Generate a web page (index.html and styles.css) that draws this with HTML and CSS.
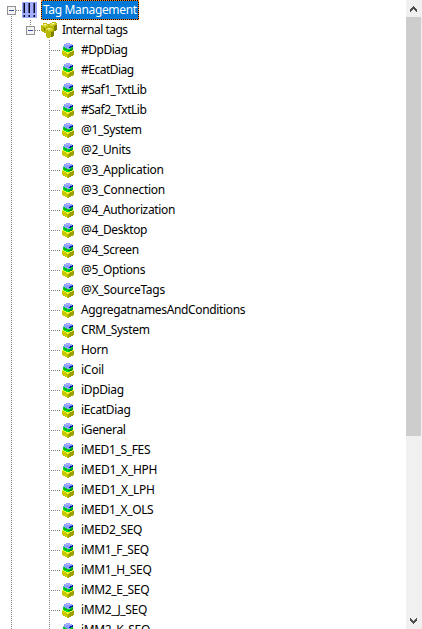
FILE: index.html
```html
<!DOCTYPE html>
<html lang="en">
<head>
<meta charset="utf-8">
<title>Tag Management</title>
<link rel="stylesheet" href="styles.css">
</head>
<body>
<svg class="defs" width="0" height="0">
  <symbol id="cube" viewBox="0 0 12 16">
    <path fill="#c8c800" d="M0 8h6v8H5v-1H3v-1H1v-1H0z"/>
    <path fill="#a0a000" d="M6 8h6v5h-1v1H9v1H7v1H6z"/>
    <path fill="#f4f430" d="M0 8h12v1h-2v1H8v1H7v1H5v-1H4v-1H2V9H0z"/>
    <path fill="#00dc20" d="M1 5h10v3h-1v1H8v1H4V9H2V8H1z"/>
    <path fill="#008c28" d="M6 9V8h2V7h2V6h1v2h-1v1zM2 6h1v1h2v1H3V7H2z"/>
    <path fill="#8c9cff" d="M1 4h1V2h2V1h4v1h2v2h1v1H9v1H8v1H5V6H3V5H1z"/>
    <path fill="#a8b4ff" d="M3 2h2V1h2v1h2v1H3z"/>
    <path fill="#0010b8" d="M7 5h1V4h2V3h1v2H9v1H7z"/>
  </symbol>
  <symbol id="group" viewBox="0 0 17 16">
    <path fill="#b8b800" d="M0 3h2V1h4v1h3V1h2V0h4v1h1v7h-1v1h-2v5h-1v1H9v1H6v-1H5v-4H3v-1H1V9H0z"/>
    <path fill="#d8d840" d="M1 3h1V2h4v1h1v1H5v1H3V4H1zM9 2h1V1h5v1h-1v1h-2v1H9zM5 7h1V6h5v1h1v1h-2v1H7V8H5z"/>
    <path fill="#f8f8a0" d="M3 2h2v1H3zM11 1h2v1h-2zM7 6h2v1H7z"/>
    <path fill="#808000" d="M13 4h1V3h2v5h-1v1h-2zM10 10h2V9h1v5h-1v1h-2zM3 6h1v3H3z"/>
  </symbol>
  <symbol id="tags" viewBox="0 0 15 16">
    <path fill="#a0adff" d="M0 0h15v16H0z"/>
    <path fill="#08081c" d="M2 1h1v10H2zM7 1h1v10H7zM12 1h1v10h-1zM2 13h1v2H2zM7 13h1v2H7zM12 13h1v2h-1z"/>
    <path fill="#50598c" d="M1 1h1v10H1zM6 1h1v10H6zM11 1h1v10h-1zM1 13h1v2H1zM6 13h1v2H6zM11 13h1v2h-1z"/>
  </symbol>
  <symbol id="minus" viewBox="0 0 9 9">
    <rect x=".5" y=".5" width="8" height="8" fill="#f4f4f4" stroke="#919191"/>
    <path fill="#354d9b" d="M2 4h5v1H2z"/>
  </symbol>
</svg>
<div class="window">
  <main class="tree">
    <div class="row root"><svg class="toggle"><use href="#minus"/></svg><i class="link"></i><svg class="tags"><use href="#tags"/></svg><span class="selected"><span class="label">Tag Management</span></span></div>
    <div class="row parent"><svg class="toggle"><use href="#minus"/></svg><i class="link"></i><svg class="group"><use href="#group"/></svg><span class="label">Internal tags</span></div>
    <div class="children">
      <div class="row"><i class="link"></i><svg class="cube"><use href="#cube"/></svg><span class="label tight">#DpDiag</span></div>
      <div class="row"><i class="link"></i><svg class="cube"><use href="#cube"/></svg><span class="label tight">#EcatDiag</span></div>
      <div class="row"><i class="link"></i><svg class="cube"><use href="#cube"/></svg><span class="label tight">#Saf1_TxtLib</span></div>
      <div class="row"><i class="link"></i><svg class="cube"><use href="#cube"/></svg><span class="label tight">#Saf2_TxtLib</span></div>
      <div class="row"><i class="link"></i><svg class="cube"><use href="#cube"/></svg><span class="label">@1_System</span></div>
      <div class="row"><i class="link"></i><svg class="cube"><use href="#cube"/></svg><span class="label">@2_Units</span></div>
      <div class="row"><i class="link"></i><svg class="cube"><use href="#cube"/></svg><span class="label wide">@3_Application</span></div>
      <div class="row"><i class="link"></i><svg class="cube"><use href="#cube"/></svg><span class="label wide">@3_Connection</span></div>
      <div class="row"><i class="link"></i><svg class="cube"><use href="#cube"/></svg><span class="label">@4_Authorization</span></div>
      <div class="row"><i class="link"></i><svg class="cube"><use href="#cube"/></svg><span class="label">@4_Desktop</span></div>
      <div class="row"><i class="link"></i><svg class="cube"><use href="#cube"/></svg><span class="label">@4_Screen</span></div>
      <div class="row"><i class="link"></i><svg class="cube"><use href="#cube"/></svg><span class="label">@5_Options</span></div>
      <div class="row"><i class="link"></i><svg class="cube"><use href="#cube"/></svg><span class="label wide">@X_SourceTags</span></div>
      <div class="row"><i class="link"></i><svg class="cube"><use href="#cube"/></svg><span class="label">AggregatnamesAndConditions</span></div>
      <div class="row"><i class="link"></i><svg class="cube"><use href="#cube"/></svg><span class="label">CRM_System</span></div>
      <div class="row"><i class="link"></i><svg class="cube"><use href="#cube"/></svg><span class="label">Horn</span></div>
      <div class="row"><i class="link"></i><svg class="cube"><use href="#cube"/></svg><span class="label wide">iCoil</span></div>
      <div class="row"><i class="link"></i><svg class="cube"><use href="#cube"/></svg><span class="label">iDpDiag</span></div>
      <div class="row"><i class="link"></i><svg class="cube"><use href="#cube"/></svg><span class="label">iEcatDiag</span></div>
      <div class="row"><i class="link"></i><svg class="cube"><use href="#cube"/></svg><span class="label">iGeneral</span></div>
      <div class="row"><i class="link"></i><svg class="cube"><use href="#cube"/></svg><span class="label">iMED1_S_FES</span></div>
      <div class="row"><i class="link"></i><svg class="cube"><use href="#cube"/></svg><span class="label wide">iMED1_X_HPH</span></div>
      <div class="row"><i class="link"></i><svg class="cube"><use href="#cube"/></svg><span class="label wide">iMED1_X_LPH</span></div>
      <div class="row"><i class="link"></i><svg class="cube"><use href="#cube"/></svg><span class="label">iMED1_X_OLS</span></div>
      <div class="row"><i class="link"></i><svg class="cube"><use href="#cube"/></svg><span class="label">iMED2_SEQ</span></div>
      <div class="row"><i class="link"></i><svg class="cube"><use href="#cube"/></svg><span class="label">iMM1_F_SEQ</span></div>
      <div class="row"><i class="link"></i><svg class="cube"><use href="#cube"/></svg><span class="label">iMM1_H_SEQ</span></div>
      <div class="row"><i class="link"></i><svg class="cube"><use href="#cube"/></svg><span class="label">iMM2_E_SEQ</span></div>
      <div class="row"><i class="link"></i><svg class="cube"><use href="#cube"/></svg><span class="label">iMM2_J_SEQ</span></div>
      <div class="row"><i class="link"></i><svg class="cube"><use href="#cube"/></svg><span class="label">iMM2_K_SEQ</span></div>
    </div>
  </main>
  <aside class="scrollbar">
    <svg class="arrow" viewBox="0 0 16 17"><path d="M4 9h1V8h1V7h1V6h1v1h1v1h1v1h1v3h-1v-1H9v-1H8V9H7v1H6v1H5v1H4z"/></svg>
    <div class="track"><div class="thumb"></div></div>
    <svg class="arrow" viewBox="0 0 16 17"><path d="M4 6h1v1h1v1h1v1h1V8h1V7h1V6h1v3h-1v1H9v1H8v1H7v-1H6v-1H5V9H4z"/></svg>
  </aside>
</div>
</body>
</html>
```

FILE: styles.css
```css
* { box-sizing: border-box; }
html, body { margin: 0; height: 629px; overflow: hidden; background: #fff; }
body { font: 12px/18px "Noto Sans", sans-serif; color: #000; }
svg { display: block; flex: none; shape-rendering: crispEdges; }
.defs { display: none; }
.window { display: flex; height: 629px; overflow: hidden; }
.tree {
  flex: 1;
  background: repeating-linear-gradient(#808080 0 1px, transparent 1px 2px) 11px 16px / 1px 620px no-repeat;
}
.row { display: flex; align-items: center; height: 20px; }
.root { padding-left: 7px; }
.parent {
  padding-left: 26px;
  background: repeating-linear-gradient(#808080 0 1px, transparent 1px 2px) 30px 0 / 1px 6px no-repeat;
}
.children {
  margin-left: 49px;
  background: repeating-linear-gradient(#808080 0 1px, transparent 1px 2px) 0 0 / 1px 100% no-repeat;
}
.toggle { width: 9px; height: 9px; }
.link {
  width: 13px;
  height: 1px;
  background: repeating-linear-gradient(90deg, #808080 0 1px, transparent 1px 2px) 0 0 / 11px 1px no-repeat;
}
.root .link, .parent .link { width: 6px; }
.tags { width: 15px; height: 16px; }
.group { width: 17px; height: 16px; }
.cube { width: 12px; height: 16px; }
.label { font-size: 12px; letter-spacing: -0.35px; line-height: 18px; white-space: nowrap; }
.wide { letter-spacing: -0.25px; }
.tight { letter-spacing: -0.5px; }
.parent .label { margin-left: 4px; letter-spacing: -0.5px; }
.children .label { margin-left: 7px; }
.selected {
  width: 98px;
  height: 20px;
  margin-left: 4px;
  padding-left: 1px;
  border: 1px dotted #ff8728;
  background: linear-gradient(#0078d7, #0078d7) padding-box, linear-gradient(#000, #000) border-box;
  color: #fff;
}
.selected .label { display: block; }
.scrollbar { display: flex; flex-direction: column; width: 16px; background: #f0f0f0; }
.arrow { width: 16px; height: 17px; fill: #505050; }
.track { flex: 1; }
.thumb { width: 15px; height: 419px; background: #cdcdcd; }
```
